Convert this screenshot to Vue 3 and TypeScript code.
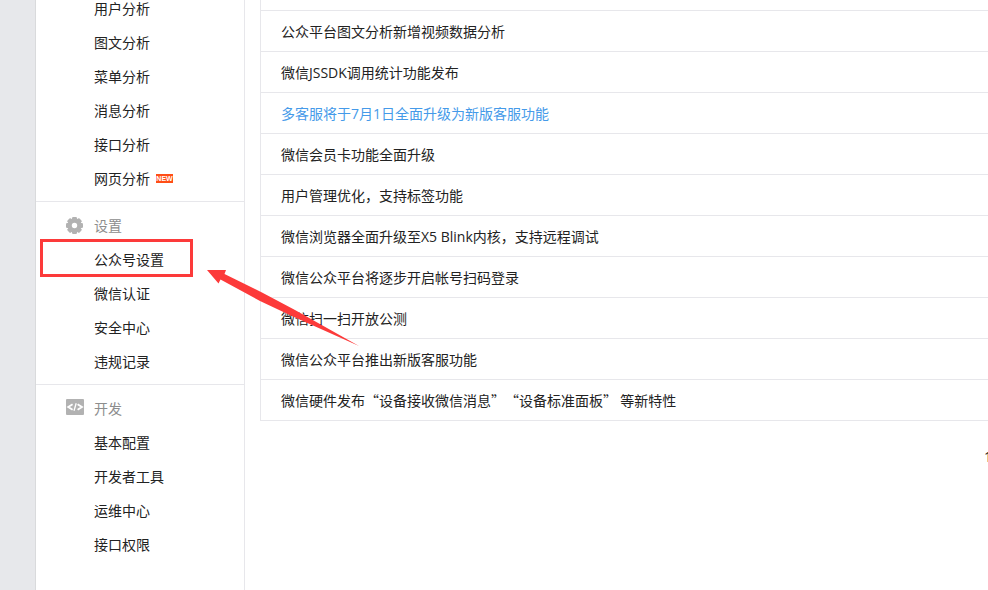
<script setup lang="ts">
interface MenuItem {
  label: string
  isNew?: boolean
  marked?: boolean
}

interface MenuSection {
  title?: string
  icon?: 'gear' | 'code'
  items: MenuItem[]
}

interface Notice {
  title: string
  highlighted?: boolean
  quoted?: boolean
}

const sections: MenuSection[] = [
  {
    items: [
      { label: '用户分析' },
      { label: '图文分析' },
      { label: '菜单分析' },
      { label: '消息分析' },
      { label: '接口分析' },
      { label: '网页分析', isNew: true },
    ],
  },
  {
    title: '设置',
    icon: 'gear',
    items: [
      { label: '公众号设置', marked: true },
      { label: '微信认证' },
      { label: '安全中心' },
      { label: '违规记录' },
    ],
  },
  {
    title: '开发',
    icon: 'code',
    items: [
      { label: '基本配置' },
      { label: '开发者工具' },
      { label: '运维中心' },
      { label: '接口权限' },
    ],
  },
]

const notices: Notice[] = [
  { title: '公众平台图文分析新增视频数据分析' },
  { title: '微信JSSDK调用统计功能发布' },
  { title: '多客服将于7月1日全面升级为新版客服功能', highlighted: true },
  { title: '微信会员卡功能全面升级' },
  { title: '用户管理优化，支持标签功能' },
  { title: '微信浏览器全面升级至X5 Blink内核，支持远程调试' },
  { title: '微信公众平台将逐步开启帐号扫码登录' },
  { title: '微信扫一扫开放公测' },
  { title: '微信公众平台推出新版客服功能' },
  { title: '微信硬件发布“设备接收微信消息”“设备标准面板” 等新特性', quoted: true },
]
</script>

<template>
  <div class="page">
    <nav class="sidebar">
      <section v-for="(section, i) in sections" :key="i" class="section">
        <h2 v-if="section.title" class="heading">
          <svg v-if="section.icon === 'gear'" class="icon" viewBox="0 0 18 20" aria-hidden="true">
            <g fill="#b2b2b2">
              <circle cx="8.5" cy="9.5" r="7" />
              <rect v-for="a in [0, 45, 90, 135]" :key="a" x="6" y="1" width="5" height="17" rx="1.2" :transform="`rotate(${a} 8.5 9.5)`" />
            </g>
            <circle cx="8.5" cy="9.5" r="2.7" fill="#fff" />
          </svg>
          <svg v-else class="icon" viewBox="0 0 18 20" aria-hidden="true">
            <rect width="18" height="16" rx="1" fill="#b2b2b2" />
            <path d="M6.6 5.2L2.2 8l4.4 2.800M11.6 5.2L16 8l-4.4 2.800" fill="none" stroke="#fff" stroke-width="1.8" />
            <path d="M10.2 4.200L8 11.800" fill="none" stroke="#fff" stroke-width="1.3" />
          </svg>
          {{ section.title }}
        </h2>
        <ul class="menu">
          <li v-for="item in section.items" :key="item.label" class="item" :class="{ marked: item.marked }">
            <a href="#" class="link">{{ item.label }}<span v-if="item.isNew" class="badge">NEW</span></a>
          </li>
        </ul>
      </section>
    </nav>

    <main class="content">
      <ul class="notices">
        <li v-for="notice in notices" :key="notice.title" class="notice">
          <a href="#" class="title" :class="{ highlighted: notice.highlighted, quoted: notice.quoted }">{{ notice.title }}</a>
        </li>
      </ul>
      <div class="pager"><span class="current">1</span></div>
    </main>

    <svg class="arrow" viewBox="0 0 152 76" aria-hidden="true">
      <path d="M0 0H19L17.5 4L55 22.500L88 40L152 76L87 47L53 31L13.500 9.500L11.500 13.500Z" fill="#fc3a3a" />
    </svg>
  </div>
</template>

<style>
body {
  margin: 0;
  background: #fff;
}
</style>

<style scoped>
.page {
  position: relative;
  display: flex;
  min-height: 100vh;
  box-sizing: border-box;
  overflow: hidden;
  border-left: 35px solid #e7e8eb;
  background: #fff;
  color: #222;
  font-family: "Open Sans", "Noto Sans CJK SC", sans-serif;
  font-size: 14px;
  text-spacing-trim: space-all;
}

.sidebar {
  flex: 0 0 208px;
  margin-top: -15px;
  border-left: 1px solid #d9dadc;
  border-right: 1px solid #e7e7eb;
}

.section {
  padding: 7px 0 5px;
  border-bottom: 1px solid #e7e7eb;
}

.section:last-child {
  border-bottom: 0;
}

.heading {
  display: flex;
  align-items: center;
  gap: 10px;
  margin: 0;
  padding-left: 30px;
  color: #8d8d8d;
  font-size: 14px;
  font-weight: 400;
  line-height: 34px;
}

.icon {
  width: 18px;
  height: 20px;
}

.menu,
.notices {
  margin: 0;
  padding: 0;
  list-style: none;
}

.item {
  position: relative;
}

.link {
  display: flex;
  align-items: center;
  gap: 6px;
  padding-left: 58px;
  line-height: 34px;
  color: inherit;
  text-decoration: none;
}

.badge {
  width: 17px;
  height: 9px;
  margin-bottom: 1px;
  background: #ff4e16;
  color: #fff;
  font-family: "Liberation Sans", sans-serif;
  font-size: 7px;
  font-weight: 700;
  line-height: 9px;
  text-align: center;
}

.marked::after {
  content: "";
  position: absolute;
  top: -4px;
  left: 4px;
  width: 147px;
  height: 32px;
  border: 3px solid #fc3a3a;
  pointer-events: none;
}

.content {
  flex: 1;
  min-width: 0;
  padding-left: 15px;
}

.notices {
  padding-top: 10px;
  border-left: 1px solid #e7e7eb;
  border-bottom: 1px solid #e7e7eb;
}

.notice {
  height: 40px;
  padding-left: 20px;
  border-top: 1px solid #e7e7eb;
  line-height: 42px;
}

.title {
  display: block;
  color: inherit;
  text-decoration: none;
  white-space: nowrap;
}

.highlighted {
  color: #459ae9;
}

.quoted {
  font-family: "Noto Sans CJK SC", sans-serif;
  line-height: 40px;
}

.pager {
  display: flex;
  justify-content: flex-end;
  padding-top: 26px;
  line-height: 20px;
}

.current {
  width: 4px;
}

.arrow {
  position: absolute;
  top: 270px;
  left: 172px;
  width: 152px;
  height: 76px;
  pointer-events: none;
}
</style>
